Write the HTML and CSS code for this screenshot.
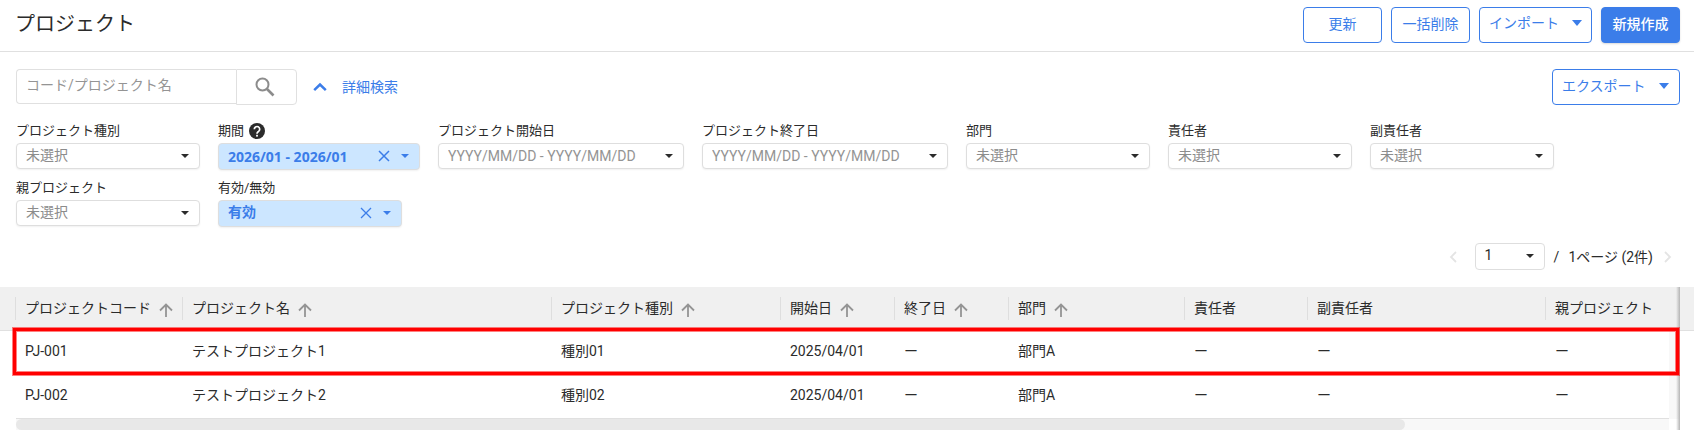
FILE: index.html
```html
<!DOCTYPE html>
<html lang="ja">
  <head>
    <meta charset="UTF-8" />
    <meta name="viewport" content="width=device-width, initial-scale=1.0" />
    <title>プロジェクト</title>
    <link rel="stylesheet" href="styles.css">
  </head>
  <body>
    <header class="header">
      <h1 class="title">プロジェクト</h1>
      <div class="actions">
        <button class="btn">更新</button>
        <button class="btn">一括削除</button>
        <button class="btn btn-menu">インポート<span class="caret"></span></button>
        <button class="btn btn-primary">新規作成</button>
      </div>
    </header>

    <div class="toolbar">
      <form class="search">
        <input class="search-input" type="text" placeholder="コード/プロジェクト名" aria-label="コード/プロジェクト名">
        <button class="search-btn" type="button" aria-label="検索">
          <svg width="20" height="20" viewBox="0 0 20 20" fill="none" stroke="#8c8c8c" stroke-width="2">
            <circle cx="7.500" cy="7.500" r="6" />
            <path d="M12 12l6.500 6.500" stroke-width="2.600" />
          </svg>
        </button>
      </form>
      <a class="detail" href="#filters">
        <svg width="14" height="10" viewBox="0 0 14 10" fill="none" stroke="#3b7de9" stroke-width="2.500">
          <path d="M1.200 8.200L7 2.500L12.800 8.200" />
        </svg>
        詳細検索
      </a>
      <button class="btn btn-menu export">エクスポート<span class="caret"></span></button>
    </div>

    <div class="filters" id="filters">
      <div class="filter">
        <label for="type">プロジェクト種別</label>
        <div class="field"><select id="type"><option>未選択</option></select></div>
      </div>
      <div class="filter filter-period">
        <label for="period">期間
          <svg width="16" height="16" viewBox="0 0 16 16">
            <circle cx="8" cy="8" r="8" fill="#2b2b2b" />
            <path d="M5.300 6.300a2.700 2.700 0 1 1 4.300 2.100C8.600 9.200 8 9.400 8 10.700" fill="none" stroke="#fff" stroke-width="1.700" />
            <rect x="7.100" y="11.800" width="1.800" height="1.800" fill="#fff" />
          </svg>
        </label>
        <div class="field active">
          <input id="period" type="text" value="2026/01 - 2026/01" readonly>
          <button class="clear" aria-label="クリア">
            <svg width="12" height="12" viewBox="0 0 12 12" stroke="#3b7de9" stroke-width="1.500"><path d="M1 1l10 10M11 1L1 11" /></svg>
          </button>
        </div>
      </div>
      <div class="filter filter-date">
        <label for="start">プロジェクト開始日</label>
        <div class="field"><input id="start" type="text" placeholder="YYYY/MM/DD - YYYY/MM/DD"></div>
      </div>
      <div class="filter filter-date">
        <label for="end">プロジェクト終了日</label>
        <div class="field"><input id="end" type="text" placeholder="YYYY/MM/DD - YYYY/MM/DD"></div>
      </div>
      <div class="filter">
        <label for="dept">部門</label>
        <div class="field"><select id="dept"><option>未選択</option></select></div>
      </div>
      <div class="filter">
        <label for="owner">責任者</label>
        <div class="field"><select id="owner"><option>未選択</option></select></div>
      </div>
      <div class="filter">
        <label for="subowner">副責任者</label>
        <div class="field"><select id="subowner"><option>未選択</option></select></div>
      </div>
      <div class="filter">
        <label for="parent">親プロジェクト</label>
        <div class="field"><select id="parent"><option>未選択</option></select></div>
      </div>
      <div class="filter">
        <label for="enabled">有効/無効</label>
        <div class="field active">
          <select id="enabled"><option>有効</option></select>
          <button class="clear" aria-label="クリア">
            <svg width="12" height="12" viewBox="0 0 12 12" stroke="#3b7de9" stroke-width="1.300"><path d="M1 1l10 10M11 1L1 11" /></svg>
          </button>
        </div>
      </div>
    </div>

    <nav class="pager">
      <button class="page-btn" aria-label="前へ" disabled>
        <svg width="8" height="12" viewBox="0 0 8 12" fill="none" stroke="#e4e4e4" stroke-width="1.800"><path d="M7 1L2 6l5 5" /></svg>
      </button>
      <div class="field page-field"><select aria-label="ページ"><option>1</option></select></div>
      <span class="slash">/</span>
      <span class="page-total">1ページ (2件)</span>
      <button class="page-btn" aria-label="次へ" disabled>
        <svg width="8" height="12" viewBox="0 0 8 12" fill="none" stroke="#e4e4e4" stroke-width="1.800"><path d="M1 1l5 5-5 5" /></svg>
      </button>
    </nav>

    <div class="grid">
      <div class="grid-body">
        <table class="table">
          <colgroup>
            <col class="c-code"><col class="c-name"><col class="c-type"><col class="c-date"><col class="c-date">
            <col class="c-dept"><col class="c-owner"><col class="c-sub"><col>
          </colgroup>
          <thead>
            <tr>
              <th>プロジェクトコード<svg class="arrow" viewBox="0 0 14 14"><path d="M7 14V1.500M1 7.500l6-6 6 6" /></svg></th>
              <th>プロジェクト名<svg class="arrow" viewBox="0 0 14 14"><path d="M7 14V1.500M1 7.500l6-6 6 6" /></svg></th>
              <th>プロジェクト種別<svg class="arrow" viewBox="0 0 14 14"><path d="M7 14V1.500M1 7.500l6-6 6 6" /></svg></th>
              <th>開始日<svg class="arrow" viewBox="0 0 14 14"><path d="M7 14V1.500M1 7.500l6-6 6 6" /></svg></th>
              <th>終了日<svg class="arrow" viewBox="0 0 14 14"><path d="M7 14V1.500M1 7.500l6-6 6 6" /></svg></th>
              <th>部門<svg class="arrow" viewBox="0 0 14 14"><path d="M7 14V1.500M1 7.500l6-6 6 6" /></svg></th>
              <th>責任者</th>
              <th>副責任者</th>
              <th>親プロジェクト</th>
            </tr>
          </thead>
          <tbody>
            <tr>
              <td>PJ-001</td>
              <td>テストプロジェクト1</td>
              <td>種別01</td>
              <td>2025/04/01</td>
              <td>ー</td>
              <td>部門A</td>
              <td>ー</td>
              <td>ー</td>
              <td>ー</td>
            </tr>
            <tr>
              <td>PJ-002</td>
              <td>テストプロジェクト2</td>
              <td>種別02</td>
              <td>2025/04/01</td>
              <td>ー</td>
              <td>部門A</td>
              <td>ー</td>
              <td>ー</td>
              <td>ー</td>
            </tr>
          </tbody>
        </table>
        <div class="scroll-x"><div class="thumb"></div></div>
        <div class="edge"></div>
        <div class="highlight"></div>
      </div>
    </div>
  </body>
</html>
```

FILE: styles.css
```css
* {
  box-sizing: border-box;
}
body {
  margin: 0;
  background: #fff;
  color: #2b2b2b;
  font-family: Roboto, "Noto Sans CJK JP", sans-serif;
  font-size: 14px;
  line-height: 20px;
}
button,
input,
select {
  font: inherit;
  color: inherit;
}
button {
  padding: 0;
  cursor: pointer;
}

/* header */
.header {
  display: flex;
  justify-content: space-between;
  align-items: center;
  height: 52px;
  padding: 0 14px 4px 15px;
  border-bottom: 1px solid #e0e0e0;
}
.title {
  margin: 0;
  font-size: 20px;
  font-weight: 400;
  line-height: 28px;
}
.actions {
  display: flex;
  gap: 9px;
  padding-top: 2px;
}
.btn {
  min-width: 79px;
  height: 36px;
  padding-bottom: 2px;
  border: 1px solid #3b7de9;
  border-radius: 4px;
  background: #fff;
  color: #3b7de9;
}
.btn-menu {
  display: flex;
  align-items: center;
  gap: 13px;
  padding: 0 9px 3px;
}
.btn-primary {
  background: #3b7de9;
  color: #fff;
  font-weight: 500;
  box-shadow: 0 1px 2px rgba(0, 0, 0, 0.15);
}
.caret {
  border: 5px solid transparent;
  border-top: 6px solid #3b7de9;
  border-bottom: 0;
}

/* search */
.toolbar {
  display: flex;
  align-items: center;
  padding: 17px 14px 0 16px;
}
.search {
  display: flex;
  align-items: flex-start;
}
.search-input {
  width: 220px;
  height: 35px;
  padding: 0 9px 3px;
  border: 1px solid #e0e0e0;
  border-right: 0;
  border-radius: 4px 0 0 4px;
}
.search-input::placeholder,
.field input::placeholder {
  color: #949494;
  opacity: 1;
}
.search-btn {
  display: flex;
  align-items: center;
  justify-content: center;
  width: 61px;
  height: 36px;
  padding-right: 3px;
  border: 1px solid #e0e0e0;
  border-radius: 0 4px 4px 0;
  background: #fff;
}
.detail {
  display: flex;
  align-items: center;
  gap: 15px;
  margin-left: 16px;
  padding-bottom: 1px;
  color: #3b7de9;
  text-decoration: none;
}
.export {
  margin-left: auto;
  width: 128px;
}

/* filters */
.filters {
  display: flex;
  flex-wrap: wrap;
  align-items: flex-start;
  gap: 8px 18px;
  padding: 16px 16px 0;
}
.filter {
  width: 184px;
}
.filter-period {
  width: 202px;
}
.filter-date {
  width: 246px;
}
.filter label {
  display: flex;
  align-items: center;
  gap: 5px;
  height: 22px;
  padding-bottom: 3px;
  font-size: 13px;
}
.field {
  position: relative;
}
.field select,
.field input {
  display: block;
  width: 100%;
  height: 26px;
  padding: 0 9px;
  border: 1px solid #dedede;
  border-radius: 4px;
  background: #fff;
  color: #8c8c8c;
  appearance: none;
  box-shadow: 0 1px 2px rgba(0, 0, 0, 0.06);
}
.field select {
  padding-bottom: 3px;
}
.field::after {
  content: "";
  position: absolute;
  top: 11px;
  right: 11px;
  border: 4px solid transparent;
  border-top-color: #2b2b2b;
  border-bottom: 0;
  pointer-events: none;
}
.field.active select,
.field.active input {
  height: 27px;
  background: #cce6ff;
  color: #3b7de9;
  font-weight: 700;
}
.field.active input {
  font-family: "Noto Sans", "Noto Sans CJK JP", sans-serif;
}
.field.active::after {
  border-top-color: #3b7de9;
}
.clear {
  position: absolute;
  top: 7px;
  right: 30px;
  display: flex;
  border: 0;
  background: none;
}

/* pager */
.pager {
  display: flex;
  align-items: center;
  justify-content: flex-end;
  padding: 16px 22px 17px;
}
.page-btn {
  display: flex;
  border: 0;
  background: none;
}
.page-field {
  width: 70px;
  margin: 0 9px 0 18px;
}
.page-field select {
  height: 27px;
  color: #2b2b2b;
  box-shadow: none;
}
.slash {
  margin-right: 9px;
}
.page-total {
  margin-right: 11px;
}

/* table */
.grid {
  padding: 0 14px 0 15px;
  background: linear-gradient(#f0f0f0 43px, #e0e0e0 43px, #e0e0e0 44px, transparent 44px);
}
.grid-body {
  position: relative;
}
.table {
  width: 100%;
  table-layout: fixed;
  border-collapse: collapse;
}
.c-code { width: 167px; }
.c-name { width: 369px; }
.c-type { width: 229px; }
.c-date { width: 114px; }
.c-dept { width: 176px; }
.c-owner { width: 123px; }
.c-sub { width: 238px; }
.table th,
.table td {
  height: 44px;
  padding: 0 0 2px 10px;
  text-align: left;
  font-weight: 400;
  white-space: nowrap;
}
.table th {
  height: 43px;
  padding-bottom: 1px;
  background: linear-gradient(#dedede, #dedede) 0 10px / 1px 23px no-repeat;
}
.arrow {
  width: 14px;
  height: 14px;
  margin-left: 8px;
  vertical-align: -4px;
  fill: none;
  stroke: #949494;
  stroke-width: 1.8;
}
.scroll-x {
  height: 12px;
  margin: 0 11px 0 1px;
  border-top: 1px solid #e0e0e0;
  background: #f8f8f8;
}
.thumb {
  width: 84%;
  height: 11px;
  border-radius: 6px;
  background: #e8e8e8;
}
/* frozen column edge and the vertical scroll gutter */
.edge {
  position: absolute;
  top: 0;
  right: 0;
  bottom: 0;
  width: 11px;
  background:
    linear-gradient(to right, transparent, #b4b4b4) right / 4px 100% no-repeat,
    linear-gradient(#f8f8f8, #f8f8f8) 0 44px / 100% 88px no-repeat;
}
.highlight {
  position: absolute;
  top: 41px;
  left: -2px;
  right: 1px;
  height: 47px;
  border: 3px solid #f00;
  box-shadow: 0 0 0 1px rgba(255, 0, 0, 0.5), inset 0 0 0 1px rgba(255, 0, 0, 0.5);
}
```
